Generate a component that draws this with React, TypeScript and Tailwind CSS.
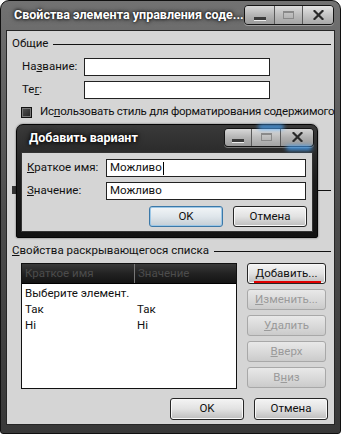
import React from "react";

function TitleButtons({ w, h, inner }: { w: number[]; h: number; inner?: boolean }) {
  return (
    <div
      className="flex rounded-[4px] border border-[#141414] overflow-hidden shadow-[0_1px_0_rgba(255,255,255,0.35)]"
      style={{ height: h }}
    >
      <div
        className="flex items-center justify-center border-r border-[#5a5a5a] bg-gradient-to-b from-[#d8d8d8] via-[#b4b4b4] to-[#9a9a9a]"
        style={{ width: w[0] }}
      >
        <div className="w-[12px] h-[3px] bg-[#3a3a3a] mt-[7px] shadow-[0_1px_0_#eee]" />
      </div>
      <div
        className="flex items-center justify-center border-r border-[#5a5a5a] bg-gradient-to-b from-[#dcdcdc] via-[#bcbcbc] to-[#a4a4a4]"
        style={{ width: w[1] }}
      >
        <div className="w-[11px] h-[8px] border border-[#8a8a8a] border-t-2 bg-transparent" />
      </div>
      <div
        className={
          "flex items-center justify-center bg-gradient-to-b " +
          (inner ? "from-[#d4d4d4] via-[#b0b0b0] to-[#969696]" : "from-[#e4e4e4] via-[#c4c4c4] to-[#a8a8a8]")
        }
        style={{ width: w[2] }}
      >
        <svg width="11" height="10" viewBox="0 0 11 10">
          <path d="M1.5 1 L9.5 9 M9.5 1 L1.5 9" stroke="#2a2a2a" strokeWidth="2.2" strokeLinecap="square" />
        </svg>
      </div>
    </div>
  );
}

function Btn({
  children,
  w,
  h = 21,
  disabled,
  def,
}: {
  children: React.ReactNode;
  w: number;
  h?: number;
  disabled?: boolean;
  def?: boolean;
}) {
  const cls = disabled
    ? "border-[#a8a8a8] text-[#9a9a9a] bg-gradient-to-b from-[#e8e8e8] via-[#dadada] to-[#cbcbcb]"
    : def
    ? "border-[#3b78a8] text-[#111] bg-gradient-to-b from-[#f2f5f7] via-[#dfe6eb] to-[#c4ced5] shadow-[inset_0_0_0_1px_#9cc7e6]"
    : "border-[#262626] text-[#111] bg-gradient-to-b from-[#f4f4f4] via-[#e2e2e2] to-[#bdbdbd] shadow-[inset_0_0_0_1px_#f8f8f8]";
  return (
    <div
      className={"shrink-0 flex items-center justify-center rounded-[3px] border leading-none " + cls}
      style={{ width: w, height: h }}
    >
      {children}
    </div>
  );
}

function Input({ w, value, caret }: { w: number; value?: string; caret?: boolean }) {
  return (
    <div
      className="shrink-0 h-[18px] bg-white border border-[#222] flex items-center pl-[3px] text-[#111]"
      style={{ width: w }}
    >
      {value}
      {caret && <span className="inline-block w-px h-[13px] bg-black ml-px" />}
    </div>
  );
}

function GroupHeader({ children }: { children: React.ReactNode }) {
  return (
    <div className="flex items-center h-[14px] pl-[5px] pr-[3px]">
      <span className="leading-none">{children}</span>
      <div className="flex-1 h-px bg-[#111] ml-[5px]" />
    </div>
  );
}

function InnerDialog() {
  return (
    <div className="absolute left-[16px] top-[124px] w-[302px] h-[114px] rounded-t-[7px] rounded-b-[2px] border border-[#050505] bg-gradient-to-b from-[#3a3a3a] via-[#1c1c1c] to-[#121212] flex flex-col shadow-[0_0_2px_rgba(0,0,0,0.6)]">
      <div className="h-[27px] flex items-center pl-[12px] pr-[3px]">
        <span className="flex-1 text-white font-bold text-[12.5px] [text-shadow:0_0_3px_#000,0_0_6px_#000]">
          Добавить вариант
        </span>
        <div className="relative mt-[-3px]">
          <div className="absolute left-[34px] top-[-3px] w-[26px] h-[4px] rounded-full bg-[#4aa8ff] blur-[2px]" />
          <div className="absolute left-[62px] bottom-[-3px] w-[26px] h-[4px] rounded-full bg-[#4aa8ff] blur-[2px]" />
          <TitleButtons w={[27, 29, 32]} h={19} inner />
        </div>
      </div>
      <div className="flex-1 mx-[4px] mb-[5px] bg-[#d5d5d5] border border-[#333] flex flex-col">
        <div className="flex items-center mt-[6px] pl-[5px]">
          <span className="w-[79px]">
            <u>К</u>раткое имя:
          </span>
          <Input w={200} value="Можливо" caret />
        </div>
        <div className="flex items-center mt-[5px] pl-[5px]">
          <span className="w-[79px]">
            <u>З</u>начение:
          </span>
          <Input w={200} value="Можливо" />
        </div>
        <div className="flex justify-end gap-[10px] mt-[6px] pr-[5px]">
          <Btn w={74} def>
            OK
          </Btn>
          <Btn w={74}>Отмена</Btn>
        </div>
      </div>
    </div>
  );
}

export default function App() {
  return (
    <div className="relative w-[341px] h-[435px] bg-white font-['Roboto',sans-serif] text-[11.5px] text-[#111] overflow-hidden">
      <div className="w-[341px] h-[434px] rounded-t-[9px] rounded-b-[3px] border border-[#101010] bg-gradient-to-b from-[#727272] via-[#4c4c4c] to-[#383838] flex flex-col">
        <div className="h-[29px] flex items-center pl-[13px] pr-[6px]">
          <span className="flex-1 text-white font-bold text-[12.5px] [text-shadow:0_0_3px_#000,0_0_5px_#222]">
            Свойства элемента управления соде...
          </span>
          <div className="mt-[-2px]">
            <TitleButtons w={[30, 28, 30]} h={20} />
          </div>
        </div>
        <div className="flex-1 mx-[5px] mb-[8px] bg-[#d5d5d5] border border-[#262626] flex flex-col">
          <div className="mt-[6px]">
            <GroupHeader>Общие</GroupHeader>
          </div>
          <div className="flex items-center mt-[7px] pl-[15px]">
            <span className="w-[62px]">
              На<u>з</u>вание:
            </span>
            <Input w={186} />
          </div>
          <div className="flex items-center mt-[5px] pl-[15px]">
            <span className="w-[62px]">
              Те<u>г</u>:
            </span>
            <Input w={186} />
          </div>
          <div className="flex items-center mt-[6px] h-[14px] pl-[14px]">
            <div className="shrink-0 w-[11px] h-[11px] border border-[#111] bg-gradient-to-br from-[#555] to-[#222] shadow-[inset_0_0_0_1px_#777]" />
            <span className="ml-[8px] whitespace-nowrap tracking-[-0.25px]">
              Ис<u>п</u>ользовать стиль для форматирования содержимого
            </span>
          </div>
          <div className="h-[125px] flex flex-col">
            <div className="mt-[67px] flex items-center pl-[5px] pr-[3px]">
              <div className="w-[4px] h-[8px] bg-[#333]" />
              <div className="flex-1 h-px bg-[#111] ml-[4px]" />
            </div>
          </div>
          <GroupHeader>
            <u>С</u>войства раскрывающегося списка
          </GroupHeader>
          <div className="flex mt-[5px] pl-[14px]">
            <div className="w-[216px] h-[126px] bg-white border border-[#111] flex flex-col">
              <div className="flex h-[20px] bg-gradient-to-b from-[#3a3a3a] via-[#222] to-[#141414] border-b border-[#000] text-[#4c4c4c]">
                <div className="w-[113px] border-r border-[#777] flex items-center pl-[3px]">Краткое имя</div>
                <div className="flex-1 flex items-center pl-[3px]">Значение</div>
              </div>
              <div className="h-[17px] flex items-center pl-[3px] mt-[1px]">Выберите элемент.</div>
              <div className="flex h-[16px] items-center">
                <span className="w-[112px] pl-[3px]">Так</span>
                <span className="pl-[3px]">Так</span>
              </div>
              <div className="flex h-[16px] items-center">
                <span className="w-[112px] pl-[3px]">Ні</span>
                <span className="pl-[3px]">Ні</span>
              </div>
            </div>
            <div className="flex flex-col gap-[5px] ml-[10px]">
              <Btn w={79}>
                <span className="relative">
                  <u>Д</u>обавить...
                  <span className="absolute left-[-2px] right-[-4px] bottom-[-4px] h-[2px] bg-[#e00000]" />
                </span>
              </Btn>
              <Btn w={79} disabled>
                <span>
                  <u>И</u>зменить...
                </span>
              </Btn>
              <Btn w={79} disabled>
                <span>
                  <u>У</u>далить
                </span>
              </Btn>
              <Btn w={79} disabled>
                <span>
                  <u>В</u>верх
                </span>
              </Btn>
              <Btn w={79} disabled>
                <span>
                  В<u>н</u>из
                </span>
              </Btn>
            </div>
          </div>
          <div className="flex justify-end gap-[10px] mt-[9px] pr-[6px]">
            <Btn w={74} h={22}>
              OK
            </Btn>
            <Btn w={74} h={22}>
              Отмена
            </Btn>
          </div>
        </div>
      </div>
      <InnerDialog />
    </div>
  );
}
